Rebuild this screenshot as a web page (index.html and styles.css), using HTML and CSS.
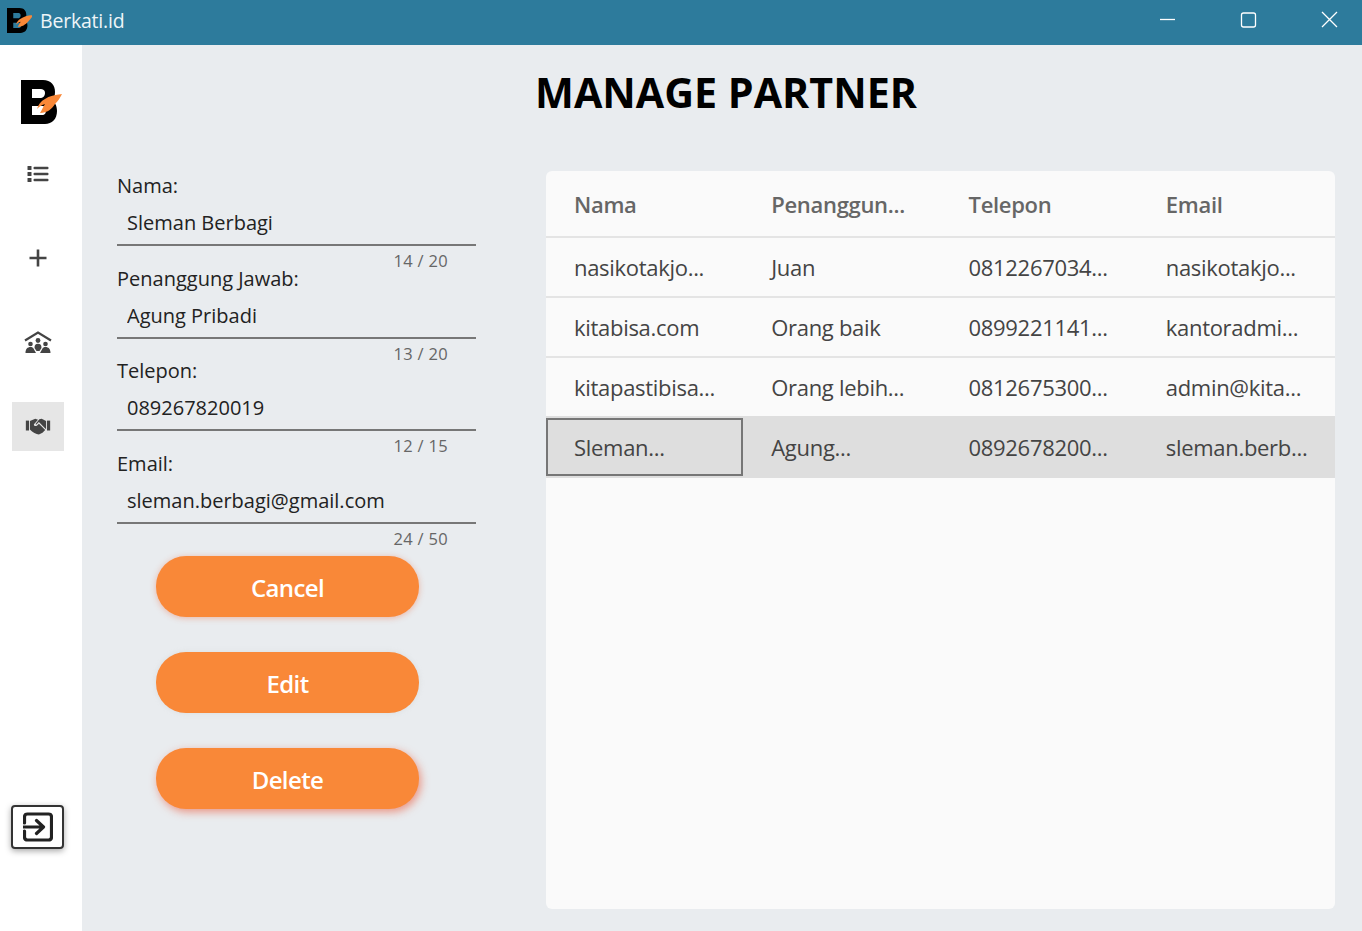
FILE: index.html
```html
<!DOCTYPE html>
<html lang="id">
<head>
    <meta charset="UTF-8">
    <meta name="viewport" content="width=device-width, initial-scale=1.0">
    <title>Berkati.id</title>
    <link rel="stylesheet" href="styles.css">
</head>
<body>
    <header class="titlebar">
        <div class="titlebar-brand">
            <svg class="logo-small" viewBox="0 0 44 44" width="25" height="25">
                <path class="logo-b" fill-rule="evenodd" d="M0 0H22C30 0 34 5 34 12C34 16 33 18 31 20C34 22 36 26 36 31C36 39 31 44 24 44H0ZM11 9V18H19C22 18 24 16 24 13C24 10 22 9 19 9ZM11 26V35H21C24 35 25 33 25 30C25 27 24 26 21 26Z"/>
                <path class="logo-flame" d="M46 12C38 13 29 15 24 19C20 21 17 25 16 29C18 27 20 25 24 24C22 27 21 30 19 33C26 33 33 29 37 24C41 20 44 17 46 12Z"/>
            </svg>
            <span class="titlebar-name">Berkati.id</span>
        </div>
        <div class="window-controls">
            <svg width="81" height="45" viewBox="0 0 81 45"><path d="M41 19.500H56" /></svg>
            <svg width="81" height="45" viewBox="0 0 81 45"><rect x="41.500" y="13" width="14" height="14" rx="2"/></svg>
            <svg width="81" height="45" viewBox="0 0 81 45"><path d="M41 12L56 27M56 12L41 27"/></svg>
        </div>
    </header>

    <div class="app">
        <nav class="sidebar">
            <svg class="logo-big" viewBox="0 0 44 44" width="44" height="44">
                <path class="logo-b" fill-rule="evenodd" d="M0 0H22C30 0 34 5 34 12C34 16 33 18 31 20C34 22 36 26 36 31C36 39 31 44 24 44H0ZM11 9V18H19C22 18 24 16 24 13C24 10 22 9 19 9ZM11 26V35H21C24 35 25 33 25 30C25 27 24 26 21 26Z"/>
                <path class="logo-flame" d="M41 14C34 15 28 16 24 19C20 21 17 25 16 29C18 27 20 25 24 24C22 27 21 30 19 33C26 33 31 29 34 24C37 21 39 18 41 14Z"/>
            </svg>

            <div class="nav-item nav-list">
                <svg viewBox="0 0 22 18" width="22" height="18">
                    <rect class="icon-fill" x="0.500" y="1" width="4" height="4" rx="0.500"/>
                    <rect class="icon-fill" x="0.500" y="7" width="4" height="4" rx="0.500"/>
                    <rect class="icon-fill" x="0.500" y="13" width="4" height="4" rx="0.500"/>
                    <rect class="icon-fill" x="6.500" y="1.700" width="15" height="2.600" rx="1"/>
                    <rect class="icon-fill" x="6.500" y="7.700" width="15" height="2.600" rx="1"/>
                    <rect class="icon-fill" x="6.500" y="13.700" width="15" height="2.600" rx="1"/>
                </svg>
            </div>
            <div class="nav-item nav-add">
                <svg viewBox="0 0 18 18" width="18" height="18">
                    <path class="icon-line" d="M9 0.500V17.500M0.500 9H17.500"/>
                </svg>
            </div>
            <div class="nav-item nav-org">
                <svg viewBox="0 0 28 24" width="28" height="24">
                    <path class="icon-roof" d="M1 9.500L14 1.500L27 9.500"/>
                    <circle class="icon-fill" cx="14" cy="9.500" r="2.400"/>
                    <circle class="icon-fill" cx="6.500" cy="13" r="2.300"/>
                    <circle class="icon-fill" cx="21.500" cy="13" r="2.300"/>
                    <path class="icon-fill" d="M10.500 17C10.500 14 11.500 12.800 14 12.800C16.500 12.800 17.500 14 17.500 17L15.500 20H12.500Z"/>
                    <path class="icon-fill" d="M1.500 22C1.500 18 3.500 16 6.500 16C8 16 9 16.500 9.500 17.500L12 22Z"/>
                    <path class="icon-fill" d="M26.500 22C26.500 18 24.500 16 21.500 16C20 16 19 16.500 18.500 17.500L16 22Z"/>
                </svg>
            </div>
            <div class="nav-item nav-partner">
                <svg viewBox="0 0 28 20" width="26" height="18">
                    <rect class="icon-fill" x="0.500" y="4" width="3.500" height="11"/>
                    <rect class="icon-fill" x="24" y="4" width="3.500" height="11"/>
                    <path class="icon-fill" d="M5 4.500L11 2L14 3L9.500 8C9 9.500 11 11 13 9.500L15 7.500L22 14.500L19 17.500L15 19.500C12 19.500 8 17 5 14Z"/>
                    <path class="icon-fill" d="M15.500 2.500L18 2L23 4.500V13.500L21.800 12.600L15 5.600L12.500 8C11.500 8.500 11 8 11.500 7.500Z"/>
                </svg>
            </div>

            <button class="logout" type="button">
                <svg viewBox="0 0 30 30" width="30" height="30">
                    <path class="icon-exit" d="M1.500 11V5C1.500 3 2.500 2 4.500 2H25.500C27.500 2 28.500 3 28.500 5V25C28.500 27 27.500 28 25.500 28H4.500C2.500 28 1.500 27 1.500 25V19"/>
                    <path class="icon-exit" d="M0 15H20M13.500 8.500L20.500 15L13.500 21.500"/>
                </svg>
            </button>
        </nav>

        <main class="content">
            <h1 class="page-title">MANAGE PARTNER</h1>

            <div class="columns">
                <section class="form-panel">
                    <form class="partner-form">
                        <div class="field">
                            <label for="nama">Nama:</label>
                            <input id="nama" type="text" value="Sleman Berbagi">
                            <span class="counter">14 / 20</span>
                        </div>
                        <div class="field">
                            <label for="pj">Penanggung Jawab:</label>
                            <input id="pj" type="text" value="Agung Pribadi">
                            <span class="counter">13 / 20</span>
                        </div>
                        <div class="field">
                            <label for="telepon">Telepon:</label>
                            <input id="telepon" type="text" value="089267820019">
                            <span class="counter">12 / 15</span>
                        </div>
                        <div class="field">
                            <label for="email">Email:</label>
                            <input id="email" type="text" value="sleman.berbagi@gmail.com">
                            <span class="counter">24 / 50</span>
                        </div>
                        <div class="form-buttons">
                            <button class="btn btn-glow" type="button">Cancel</button>
                            <button class="btn btn-soft" type="button">Edit</button>
                            <button class="btn btn-hover" type="button">Delete</button>
                        </div>
                    </form>
                </section>

                <section class="table-card">
                    <div class="row row-head">
                        <div class="cell">Nama</div>
                        <div class="cell">Penanggun...</div>
                        <div class="cell">Telepon</div>
                        <div class="cell">Email</div>
                    </div>
                    <div class="row">
                        <div class="cell">nasikotakjo...</div>
                        <div class="cell">Juan</div>
                        <div class="cell">0812267034...</div>
                        <div class="cell">nasikotakjo...</div>
                    </div>
                    <div class="row">
                        <div class="cell">kitabisa.com</div>
                        <div class="cell">Orang baik</div>
                        <div class="cell">0899221141...</div>
                        <div class="cell">kantoradmi...</div>
                    </div>
                    <div class="row">
                        <div class="cell">kitapastibisa...</div>
                        <div class="cell">Orang lebih...</div>
                        <div class="cell">0812675300...</div>
                        <div class="cell">admin@kita...</div>
                    </div>
                    <div class="row row-selected">
                        <div class="cell cell-focus">Sleman...</div>
                        <div class="cell">Agung...</div>
                        <div class="cell">0892678200...</div>
                        <div class="cell">sleman.berb...</div>
                    </div>
                </section>
            </div>
        </main>
    </div>
</body>
</html>
```

FILE: styles.css
```css
* {
    box-sizing: border-box;
}

html, body {
    height: 100%;
}

body {
    margin: 0;
    font-family: "Open Sans", "Noto Sans", Arial, sans-serif;
    color: #333;
    overflow: hidden;
    display: flex;
    flex-direction: column;
}

/* title bar */
.titlebar {
    height: 45px;
    background-color: #2d7b9c;
    display: flex;
    justify-content: space-between;
    flex-shrink: 0;
}

.titlebar-brand {
    display: flex;
    align-items: center;
    padding-left: 7px;
    gap: 8px;
}

.logo-small {
    margin-top: -4px;
}

.titlebar-name {
    color: #eef5f8;
    font-size: 19.500px;
    letter-spacing: -0.2px;
    margin-bottom: 5px;
}

.window-controls {
    display: flex;
}

.window-controls svg {
    display: block;
    fill: none;
    stroke: #fff;
    stroke-width: 1.300;
}

.logo-b {
    fill: #000;
}

.logo-flame {
    fill: #f98838;
}

/* sidebar */
.app {
    flex: 1;
    display: flex;
    min-height: 0;
}

.sidebar {
    width: 82px;
    flex-shrink: 0;
    background-color: #fff;
    display: flex;
    flex-direction: column;
    align-items: center;
    padding-top: 35px;
    padding-right: 6px;
}

.logo-big {
    margin-bottom: 26px;
    margin-left: 10px;
}

.nav-item {
    width: 52px;
    height: 48px;
    display: flex;
    align-items: center;
    justify-content: center;
    margin-bottom: 36px;
}

.nav-org {
    padding-top: 2px;
}

.nav-partner {
    height: 49px;
    padding-bottom: 2px;
    background-color: #e6e6e6;
}

.icon-fill {
    fill: #444;
}

.icon-line {
    fill: none;
    stroke: #444;
    stroke-width: 2.600;
}

.icon-roof {
    fill: none;
    stroke: #444;
    stroke-width: 2.200;
}

.icon-exit {
    fill: none;
    stroke: #222;
    stroke-width: 3.200;
    stroke-linecap: round;
    stroke-linejoin: round;
}

.logout {
    width: 53px;
    height: 44px;
    margin-top: auto;
    margin-bottom: 82px;
    margin-right: 1px;
    padding: 0;
    background-color: #fff;
    border: 2px solid #333;
    border-radius: 4px;
    box-shadow: 0 2px 6px rgba(0, 0, 0, 0.35);
    display: flex;
    align-items: center;
    justify-content: center;
}

/* main area */
.content {
    flex: 1;
    min-width: 0;
    background-color: #e9ecef;
    display: flex;
    flex-direction: column;
    padding: 0 27px 22px 35px;
}

.page-title {
    margin: 19px 0 0;
    height: 107px;
    font-size: 41.200px;
    line-height: 56px;
    font-weight: 700;
    text-align: center;
    color: #000;
}

.columns {
    flex: 1;
    display: flex;
    min-height: 0;
}

.form-panel {
    width: 429px;
    flex-shrink: 0;
}

.partner-form {
    width: 359px;
}

.field {
    display: flex;
    flex-direction: column;
}

.field label {
    font-size: 20px;
    line-height: 28px;
    color: #222;
    height: 30px;
    padding-top: 1px;
}

.field input {
    border: none;
    border-bottom: 2px solid #777;
    background: transparent;
    height: 45px;
    padding: 4px 10px 4px;
    width: 100%;
    font: inherit;
    font-size: 20px;
    color: #222;
    outline: none;
}

.counter {
    font-size: 16.500px;
    line-height: 20px;
    color: #666;
    text-align: right;
    padding-right: 28px;
    margin-top: 5px;
    margin-bottom: -7.500px;
    letter-spacing: 0.3px;
}

.form-buttons {
    display: flex;
    flex-direction: column;
    align-items: flex-start;
    gap: 35px;
    margin-top: 15px;
    padding-left: 39px;
}

.btn {
    width: 263px;
    height: 61px;
    padding-top: 2px;
    border: none;
    border-radius: 30px;
    background-color: #f98838;
    color: #fff;
    font: inherit;
    font-size: 24px;
    font-weight: 600;
    letter-spacing: -0.6px;
}

.btn-glow {
    box-shadow: 0 1px 6px rgba(235, 110, 70, 0.45);
}

.btn-soft {
    box-shadow: 0 0 5px rgba(200, 200, 200, 0.4);
}

.btn-hover {
    box-shadow: 2px 3px 9px rgba(235, 90, 60, 0.6);
}

/* table */
.table-card {
    flex: 1;
    min-width: 0;
    background-color: #fafafa;
    border-radius: 6px;
    overflow: hidden;
}

.row {
    display: grid;
    grid-template-columns: repeat(4, 1fr);
    height: 60px;
    border-bottom: 2px solid #e4e4e4;
    align-items: stretch;
}

.row-head {
    height: 67px;
}

.cell {
    display: flex;
    align-items: center;
    padding-left: 28px;
    font-size: 22px;
    color: #444;
    letter-spacing: -0.3px;
    white-space: nowrap;
    overflow: hidden;
}

.row-head .cell {
    color: #666;
    font-weight: 600;
    letter-spacing: -0.3px;
}

.row-selected {
    height: 62px;
    margin-top: -2px;
    background-color: #dedede;
    border-bottom: none;
}

.cell-focus {
    border: 2px solid #767676;
    margin: 2px 0;
    padding-left: 26px;
}
```
